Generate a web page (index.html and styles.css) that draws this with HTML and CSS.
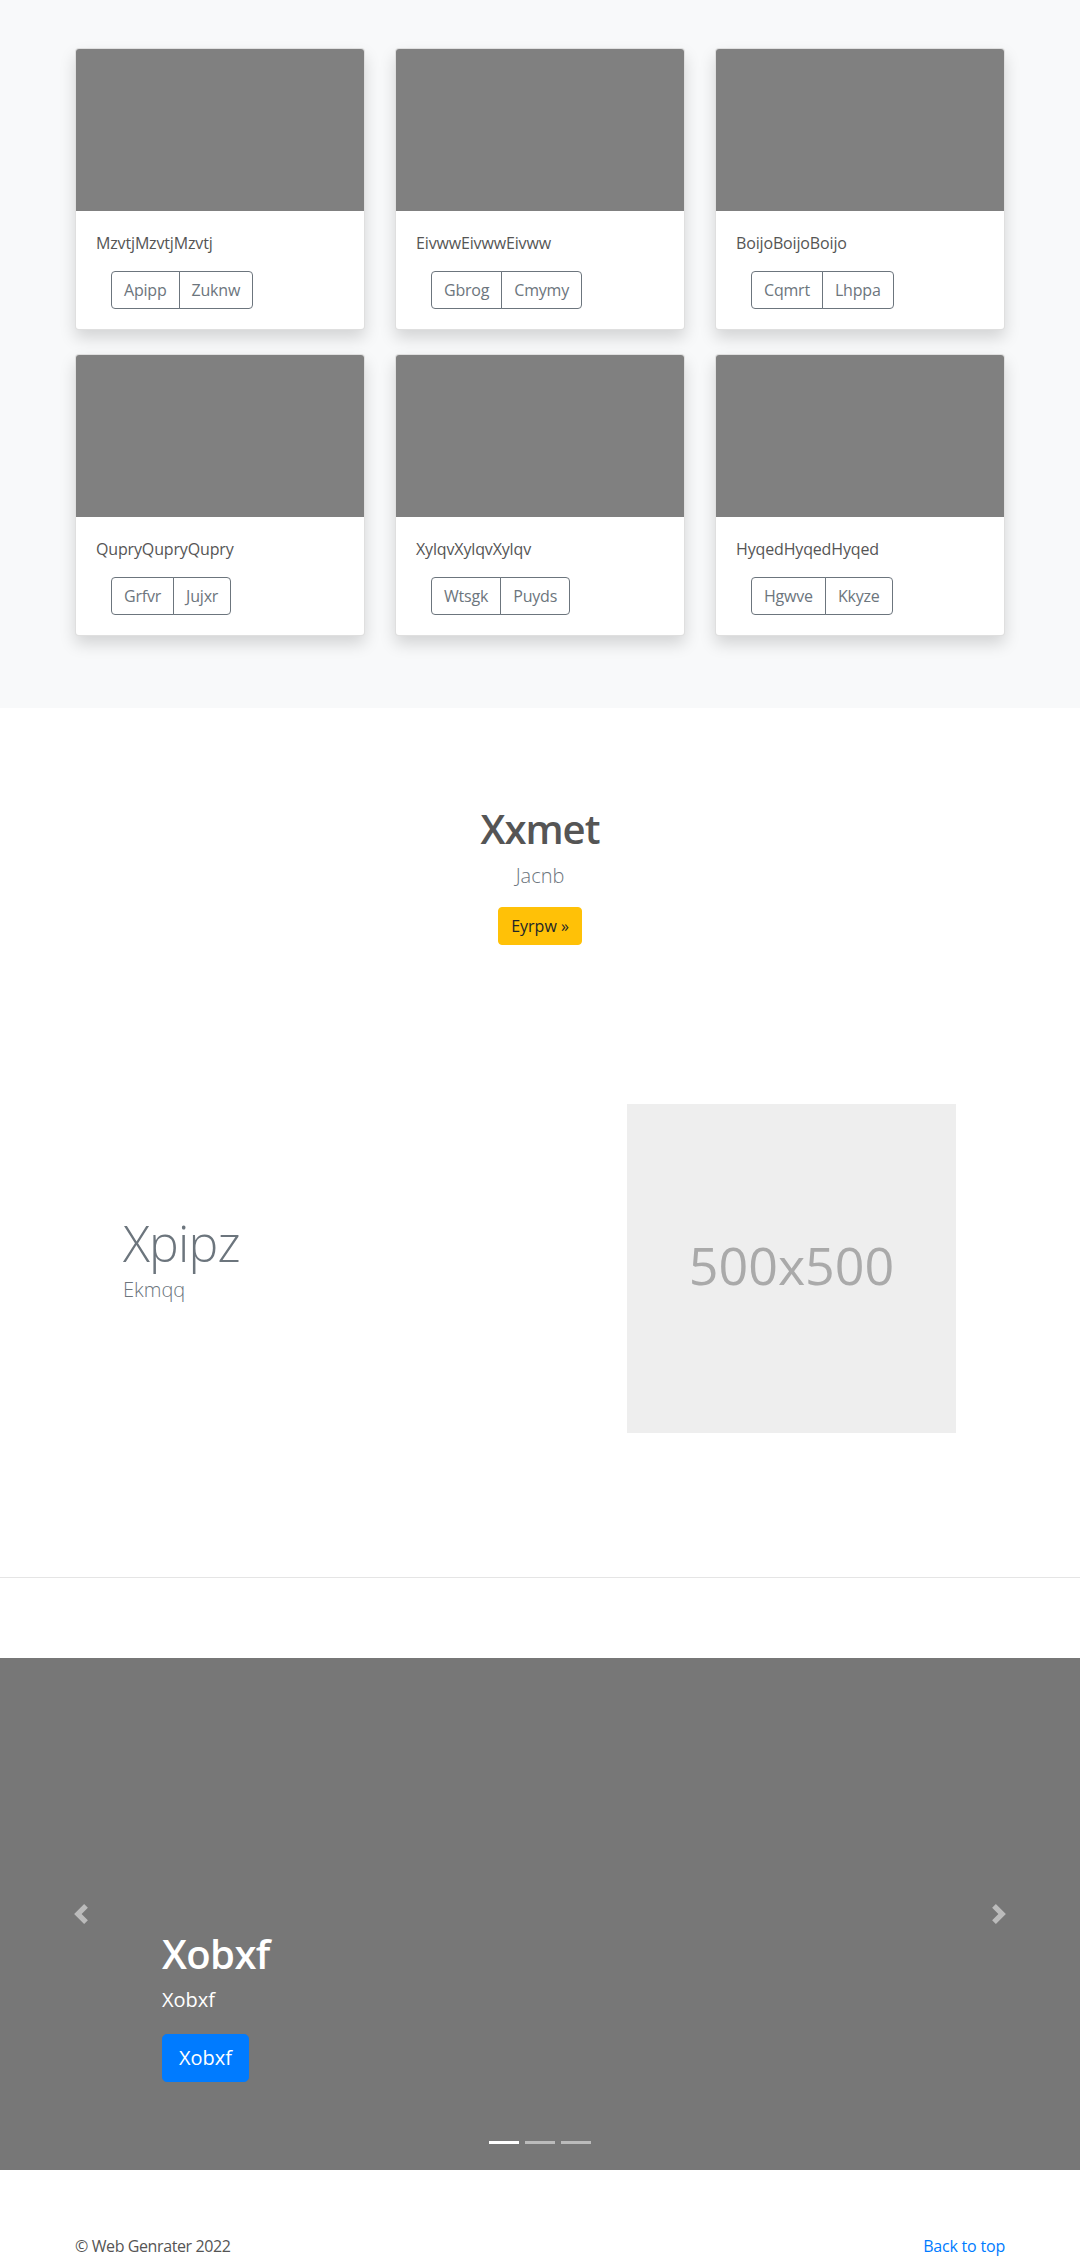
FILE: index.html
```html
<!DOCTYPE html>
<html lang="en">
<head>
<meta charset="utf-8">
<title>Web Genrater</title>
<link rel="stylesheet" href="styles.css">
</head>
<body>
<main>
  <section class="album">
    <div class="container">
      <div class="card-grid">
        <div class="card">
          <div class="card-img"></div>
          <div class="card-body">
            <p class="card-text">MzvtjMzvtjMzvtj</p>
            <div class="btn-group"><button class="btn btn-outline">Apipp</button><button class="btn btn-outline">Zuknw</button></div>
          </div>
        </div>
        <div class="card">
          <div class="card-img"></div>
          <div class="card-body">
            <p class="card-text">EivwwEivwwEivww</p>
            <div class="btn-group"><button class="btn btn-outline">Gbrog</button><button class="btn btn-outline">Cmymy</button></div>
          </div>
        </div>
        <div class="card">
          <div class="card-img"></div>
          <div class="card-body">
            <p class="card-text">BoijoBoijoBoijo</p>
            <div class="btn-group"><button class="btn btn-outline">Cqmrt</button><button class="btn btn-outline">Lhppa</button></div>
          </div>
        </div>
        <div class="card">
          <div class="card-img"></div>
          <div class="card-body">
            <p class="card-text">QupryQupryQupry</p>
            <div class="btn-group"><button class="btn btn-outline">Grfvr</button><button class="btn btn-outline">Jujxr</button></div>
          </div>
        </div>
        <div class="card">
          <div class="card-img"></div>
          <div class="card-body">
            <p class="card-text">XylqvXylqvXylqv</p>
            <div class="btn-group"><button class="btn btn-outline">Wtsgk</button><button class="btn btn-outline">Puyds</button></div>
          </div>
        </div>
        <div class="card">
          <div class="card-img"></div>
          <div class="card-body">
            <p class="card-text">HyqedHyqedHyqed</p>
            <div class="btn-group"><button class="btn btn-outline">Hgwve</button><button class="btn btn-outline">Kkyze</button></div>
          </div>
        </div>
      </div>
    </div>
  </section>

  <section class="jumbo">
    <h1 class="jumbo-heading">Xxmet</h1>
    <p class="lead">Jacnb</p>
    <a href="#" class="btn btn-warning">Eyrpw &raquo;</a>
  </section>

  <section class="feature">
    <div class="feature-row">
      <div class="feature-col">
        <h2 class="feature-heading">Xpipz</h2>
        <p class="feature-sub">Ekmqq</p>
      </div>
      <div class="feature-col feature-col-img">
        <div class="placeholder">500x500</div>
      </div>
    </div>
  </section>

  <hr class="divider">

  <section class="carousel">
    <a class="control control-prev" href="#">
      <svg class="control-icon" viewBox="0 0 8 8" width="20" height="20"><path fill="#fff" d="M5.25 0l-4 4 4 4 1.5-1.5L4.25 4l2.5-2.5L5.25 0z"/></svg>
    </a>
    <a class="control control-next" href="#">
      <svg class="control-icon" viewBox="0 0 8 8" width="20" height="20"><path fill="#fff" d="M2.75 0l-1.5 1.5L3.75 4l-2.5 2.5L2.75 8l4-4-4-4z"/></svg>
    </a>
    <div class="caption">
      <h1 class="caption-title">Xobxf</h1>
      <p class="caption-text">Xobxf</p>
      <div class="caption-action"><a href="#" class="btn btn-lg btn-primary">Xobxf</a></div>
    </div>
    <ol class="indicators">
      <li class="active"></li>
      <li></li>
      <li></li>
    </ol>
  </section>

  <footer class="footer">
    <p class="copy">&copy; Web Genrater 2022</p>
    <p class="back"><a href="#">Back to top</a></p>
  </footer>
</main>
</body>
</html>
```

FILE: styles.css
```css
* { box-sizing: border-box; }

body {
  margin: 0;
  font-family: "Open Sans", "Noto Sans", sans-serif;
  font-size: 16px;
  line-height: 1.5;
  color: #212529;
  background: #fff;
}

p { margin: 0; }
h1, h2 { margin: 0; }

.container {
  width: 930px;
  margin: 0 auto;
}

/* Album */
.album {
  background: #f8f9fa;
  padding: 48px 0 72px;
}

.card-grid {
  display: grid;
  grid-template-columns: repeat(3, 290px);
  column-gap: 30px;
  row-gap: 24px;
}

.card {
  background: #fff;
  border: 1px solid rgba(0,0,0,.125);
  border-radius: 4px;
  box-shadow: 0 8px 16px rgba(0,0,0,.15);
  overflow: hidden;
}

.card-img {
  height: 162px;
  background: #808080;
}

.card-body {
  padding: 20px;
}

.card-text {
  color: #555;
  margin-bottom: 16px;
  letter-spacing: -0.15px;
}

.btn-group {
  display: inline-flex;
  margin-left: 15px;
}

.btn {
  display: inline-block;
  font-family: inherit;
  font-size: 16px;
  line-height: 24px;
  padding: 6px 12px;
  border: 1px solid transparent;
  border-radius: 4px;
  text-decoration: none;
  background: transparent;
  cursor: pointer;
}

.btn-outline {
  color: #6c757d;
  border-color: #6c757d;
  letter-spacing: -0.2px;
}

.btn-group .btn:first-child {
  border-top-right-radius: 0;
  border-bottom-right-radius: 0;
}

.btn-group .btn + .btn {
  margin-left: -1px;
  border-top-left-radius: 0;
  border-bottom-left-radius: 0;
}

/* Jumbotron */
.jumbo {
  text-align: center;
  padding: 97px 0 64px;
}

.jumbo-heading {
  font-size: 40px;
  line-height: 1.2;
  font-weight: 600;
  letter-spacing: -1px;
  color: #555;
  margin-bottom: 8px;
}

.lead {
  font-size: 20px;
  font-weight: 300;
  line-height: 30px;
  color: #6c757d;
  margin-bottom: 16px;
}

.btn-warning {
  background: #ffc107;
  border-color: #ffc107;
  color: #212529;
}

/* Featurette */
.feature {
  padding: 47px 0 16px;
}

.feature-row {
  width: 960px;
  margin: 0 auto;
  display: flex;
  align-items: center;
}

.feature-col {
  flex: 1 1 0;
  padding: 48px 63px;
}

.feature-col-img {
  display: flex;
  justify-content: flex-end;
  padding-right: 64px;
}

.feature-heading {
  font-size: 50px;
  font-weight: 300;
  line-height: 1.2;
  letter-spacing: -0.8px;
  color: #6c757d;
  margin-bottom: 2px;
}

.feature-sub {
  font-size: 20px;
  font-weight: 300;
  line-height: 30px;
  color: #6c757d;
  margin-bottom: 20px;
}

.placeholder {
  width: 329px;
  height: 329px;
  background: #eee;
  color: #aaa;
  font-size: 52px;
  display: flex;
  align-items: center;
  justify-content: center;
  padding-bottom: 8px;
}

.divider {
  margin: 80px 0;
  border: 0;
  border-top: 1px solid rgba(0,0,0,.1);
  height: 0;
}

/* Carousel */
.carousel {
  position: relative;
  height: 512px;
  background: #777;
  margin-bottom: 64px;
}

.control {
  position: absolute;
  top: 0;
  bottom: 0;
  width: 15%;
  display: flex;
  align-items: center;
  justify-content: center;
  opacity: .5;
}

.control-prev { left: 0; }
.control-next { right: 0; }

.control-icon { display: block; }

.caption {
  position: absolute;
  left: 15%;
  right: 15%;
  bottom: 48px;
  padding: 20px 0;
  color: #fff;
  text-align: left;
}

.caption-title {
  font-size: 40px;
  line-height: 1.2;
  font-weight: 600;
  letter-spacing: -0.6px;
  margin-bottom: 8px;
}

.caption-text {
  font-size: 20px;
  line-height: 1.4;
  margin-bottom: 20px;
}

.caption-action {
  display: flex;
  margin-bottom: 20px;
}

.btn-lg {
  font-size: 20px;
  line-height: 30px;
  padding: 8px 16px;
  border-radius: 4.8px;
}

.btn-primary {
  background: #007bff;
  border-color: #007bff;
  color: #fff;
}

.indicators {
  position: absolute;
  left: 0;
  right: 0;
  bottom: 26px;
  margin: 0;
  padding: 0;
  list-style: none;
  display: flex;
  justify-content: center;
}

.indicators li {
  width: 30px;
  height: 3px;
  margin: 0 3px;
  background: #fff;
  opacity: .5;
}

.indicators li.active { opacity: 1; }

/* Footer */
.footer {
  width: 930px;
  margin: 0 auto;
  display: flex;
  justify-content: space-between;
}

.footer p { margin-bottom: 16px; }

.copy {
  color: #555;
  letter-spacing: -0.4px;
}

.back a {
  color: #007bff;
  text-decoration: none;
  letter-spacing: -0.2px;
}
```
